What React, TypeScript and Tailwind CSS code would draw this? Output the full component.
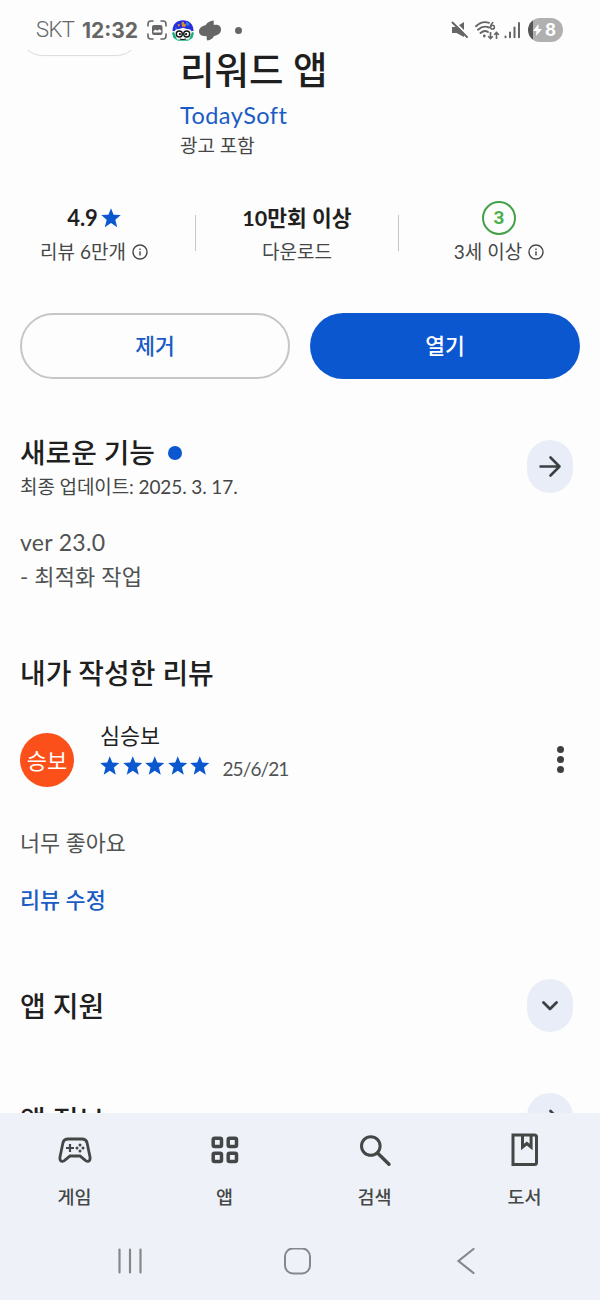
import type { ReactNode } from "react";

function Star({ className }: { className: string }) {
  return (
    <svg viewBox="0 0 20 20" className={className} fill="#0b57d0">
      <path d="M10 .2l2.6 6.500 7.200.4-5.500 4.700 1.900 7.400L10 15.100l-6.200 4.100 1.900-7.400L.2 7.100l7.200-.4z" />
    </svg>
  );
}

function InfoIcon() {
  return (
    <svg viewBox="0 0 16 16" className="size-4" fill="none" stroke="#444746" strokeWidth="1.4">
      <circle cx="8" cy="8" r="7" />
      <path d="M8 7.2v4.2M8 4.4v1.5" />
    </svg>
  );
}

function RoundButton({ label, children }: { label: string; children: ReactNode }) {
  return (
    <button
      aria-label={label}
      className="flex h-[53px] w-[46px] shrink-0 items-center justify-center rounded-[23px] bg-[#e8edf7]"
    >
      {children}
    </button>
  );
}

function StatusBar() {
  return (
    <header className="flex h-[50px] items-center pt-[10px] pl-[36px] text-[#666]">
      <span className="w-[46px] shrink-0 font-['Roboto'] text-[22px] leading-6 font-light tracking-[-0.6px]">SKT</span>
      <span className="w-[65px] shrink-0 pt-px font-['Inter'] text-[21px] leading-6 font-bold">
        12:32
      </span>

      {/* Screen capture */}
      <svg viewBox="0 0 20 20" className="size-5 shrink-0" fill="none">
        <path
          d="M1 6V4a3 3 0 0 1 3-3h2M14 1h2a3 3 0 0 1 3 3v2M19 14v2a3 3 0 0 1-3 3h-2M6 19H4a3 3 0 0 1-3-3v-2"
          stroke="#666"
          strokeWidth="1.6"
          strokeLinecap="round"
        />
        <rect x="5" y="5" width="10.5" height="10" rx="2" fill="#666" />
        <path d="M6.5 12.5V11l2-1.6 2 1.3 1.7-1.5 2 1.4v1.9z" fill="#fdfdfd" />
      </svg>

      {/* Cartoon app badge */}
      <svg viewBox="0 0 22 21" className="ml-[5px] h-[21px] w-[22px] shrink-0">
        <path d="M.5 11C.5 4 5 .3 11 .3S21.500 4 21.500 11z" fill="#2430dc" />
        <path d="M9.500 2.500l2-1 1 2.500 2 .5-1.500 2.500-3-.5zM5.500 4.500l2-.5.500 2-2 .5z" fill="#d98c34" />
        <path d="M14 1.500l3.500 2-1.500 3-2-2zM3 7l2 1-1 2z" fill="#3979e8" />
        <path d="M0 13l3-2h16l3 2-1.500 5-4.500 2.700H6L1.500 18z" fill="#18b07c" />
        <path d="M2 12Q3.500 8.500 7 9l4-1.200L15 9q3.500-.5 5 3l-3 7.500H5z" fill="#f8f8f8" />
        <circle cx="7.300" cy="14" r="3" fill="#fff" stroke="#161616" strokeWidth="1.400" />
        <circle cx="14.700" cy="14" r="3" fill="#fff" stroke="#161616" strokeWidth="1.400" />
        <circle cx="7.900" cy="14.200" r="1.100" fill="#161616" />
        <circle cx="14.100" cy="14.200" r="1.100" fill="#161616" />
        <path d="M8 19q3 1.300 6 0" stroke="#161616" strokeWidth="1" fill="none" />
      </svg>

      <svg viewBox="0 0 22 21" className="ml-[5px] h-[21px] w-[22px] shrink-0" fill="#666">
        <path d="M14.500.4C15.200 2 14.500 3.500 14.800 5C18.500 4.300 22 5.500 22 9.500C22 13.500 18.500 15.500 15 16C14 18.500 11.500 20.300 8.300 20.600C7.300 19.300 7.900 17.700 7.500 16.100C3.500 16.600 0 15 0 11.300C0 7.500 3.700 5.800 6.800 4.900C8 2.500 11 .5 14.500.4z" />
      </svg>
      <span className="ml-[14px] size-[7px] shrink-0 rounded-full bg-[#666]" />

      {/* Muted speaker */}
      <svg viewBox="0 0 18 18" className="ml-[209px] h-[18px] w-[18px] shrink-0">
        <path d="M1 6h4l8-5v15L5.500 12H1z" fill="#666" />
        <path d="M3 .5l15 15" stroke="#fdfdfd" strokeWidth="2" />
        <path d="M1.500 1.500l14.500 14.500" stroke="#666" strokeWidth="2" strokeLinecap="round" />
      </svg>

      {/* Wi-Fi 6 with traffic arrows */}
      <svg viewBox="0 0 25 19" className="ml-[6px] h-[19px] w-[25px] shrink-0" fill="none" stroke="#666">
        <path d="M1 5.200Q7-.5 14 1.800M3 8.700Q8 4 14 6.500M5.500 12Q9.500 8.500 13 11" strokeWidth="1.900" strokeLinecap="round" />
        <circle cx="9.300" cy="15" r="1.400" fill="#666" stroke="none" />
        <circle cx="17.500" cy="6.200" r="1.900" strokeWidth="1.500" />
        <path d="M18.300 1.200Q15.700 3 15.600 6" strokeWidth="1.500" />
        <path d="M15.500 11v6.500M13.200 15.300l2.300 2.300 2.300-2.300M21.500 18v-6.500M19.200 13.700l2.300-2.300 2.300 2.300" strokeWidth="1.600" />
      </svg>

      <svg viewBox="0 0 16 18" className="ml-[4px] h-[18px] w-4 shrink-0" stroke="#666" strokeWidth="2" strokeLinecap="round">
        <path d="M1.500 15.500v.8M6 11.500v4.800M10.500 6.500v9.800M15 2v14.300" />
      </svg>

      <div className="ml-[8px] flex h-6 w-[35px] shrink-0 items-center overflow-hidden rounded-full bg-linear-to-r from-[#555] from-14% to-[#b0b0b0] to-14%">
        <svg viewBox="0 0 9 12" className="ml-[5px] h-3 w-[9px] shrink-0" fill="#fff">
          <path d="M5.500 0L0 7h3.500L3 12l6-7H5.500z" />
        </svg>
        <span className="ml-[3px] font-['Inter'] text-[17px] leading-6 font-bold text-white">8</span>
      </div>
    </header>
  );
}

function AppHeader() {
  return (
    <section className="flex h-[113px]">
      {/* Lower edge of the app icon */}
      <div className="h-[7px] w-[180px] shrink-0 overflow-hidden pl-[20px]">
        <div className="-mt-[40px] h-[45px] w-[119px] rounded-[24px] bg-[#fefefe] shadow-[0_1px_1px_rgba(0,0,0,0.14)]" />
      </div>
      <div>
        <h1 className="h-[47px] text-[37.5px] leading-[40px] font-medium text-[#1f1f1f]">리워드 앱</h1>
        <p className="h-[37px] text-[23.5px] leading-[36px] tracking-[0.45px] text-[#1a5cc4]">TodaySoft</p>
        <p className="text-[19px] leading-[24px] text-[#444746]">광고 포함</p>
      </div>
    </section>
  );
}

function Stats() {
  return (
    <section className="mt-[37px] flex h-[66px] text-[19px] leading-[24px] text-[#444746]">
      <div className="flex w-[195px] flex-col items-center pr-[7px]">
        <div className="flex h-[40px] items-center gap-[3px] pb-[4px] text-[22px] font-bold text-[#1f1f1f]">
          4.9
          <Star className="size-[20px]" />
        </div>
        <div className="flex items-center gap-[6px]">
          리뷰 6만개
          <InfoIcon />
        </div>
      </div>
      <div className="mt-[15px] h-[36px] w-px bg-[#c4c7c5]" />
      <div className="flex w-[202px] flex-col items-center">
        <div className="flex h-[40px] items-center pb-[4px] text-[21.5px] font-bold text-[#1f1f1f]">10만회 이상</div>
        다운로드
      </div>
      <div className="mt-[15px] h-[36px] w-px bg-[#c4c7c5]" />
      <div className="flex flex-1 flex-col items-center pr-px">
        <div className="flex h-[40px] items-center pb-[4px]">
          <span className="flex size-[34px] items-center justify-center rounded-full border-[2.5px] border-[#43a047] font-['Roboto'] text-[19px] font-bold text-[#4caf50]">
            3
          </span>
        </div>
        <div className="flex items-center gap-[6px]">
          3세 이상
          <InfoIcon />
        </div>
      </div>
    </section>
  );
}

function WhatsNew() {
  return (
    <section className="mt-[56px] h-[218px] px-[20px]">
      <div className="flex justify-between pr-[7px]">
        <div>
          <h2 className="flex h-[36px] items-center gap-[13px] text-[27.8px] leading-[34px] font-medium text-[#1f1f1f]">
            새로운 기능
            <span className="size-[14px] rounded-full bg-[#0b57d0]" />
          </h2>
          <p className="pt-px text-[19px] leading-[30px] tracking-[-0.1px] text-[#444746]">최종 업데이트: 2025. 3. 17.</p>
        </div>
        <div className="pt-[5px]">
          <RoundButton label="새로운 기능">
            <svg viewBox="0 0 24 24" className="size-6" fill="none" stroke="#3c4043" strokeWidth="2.600" strokeLinecap="round" strokeLinejoin="round">
              <path d="M2.500 11.500h19M12.500 2.500l9 9-9 9" />
            </svg>
          </RoundButton>
        </div>
      </div>
      <p className="mt-[23px] text-[22px] leading-[34px] text-[#505352]">
        <span className="text-[23px] tracking-[0.3px]">ver 23.0</span>
        <br />
        <span className="tracking-[0.2px]">- 최적화 작업</span>
      </p>
    </section>
  );
}

function MyReview() {
  return (
    <section className="h-[326px] px-[20px]">
      <h2 className="text-[27.9px] leading-[40px] font-medium text-[#1f1f1f]">내가 작성한 리뷰</h2>
      <div className="mt-[28px] flex h-[68px]">
        <div className="mt-[12px] flex size-[54px] items-center justify-center rounded-full bg-[#fb5019] text-[22px] font-normal text-white">
          승보
        </div>
        <div className="ml-[26px]">
          <p className="text-[21.8px] leading-[30px] text-[#1f1f1f]">심승보</p>
          <div className="flex h-[30px] items-center gap-[3px]">
            {[1, 2, 3, 4, 5].map((n) => (
              <Star key={n} className="size-[19.5px]" />
            ))}
            <span className="ml-[10px] pt-[5px] text-[19px] leading-[24px] tracking-[-0.9px] text-[#505352]">25/6/21</span>
          </div>
        </div>
        <button aria-label="더보기" className="mt-[25px] mr-[16px] ml-auto flex h-[27px] flex-col gap-[3px]">
          <span className="size-[7px] rounded-full bg-[#3c4043]" />
          <span className="size-[7px] rounded-full bg-[#3c4043]" />
          <span className="size-[7px] rounded-full bg-[#3c4043]" />
        </button>
      </div>
      <p className="mt-[37px] text-[21.8px] leading-[34px] text-[#505352]">너무 좋아요</p>
      <button className="mt-[23px] text-[21.8px] leading-[34px] font-medium text-[#1a5cc4]">리뷰 수정</button>
    </section>
  );
}

const navItems = [
  {
    label: "게임",
    icon: (
      <>
        <path d="M10 6h14q4 0 5 3.500l3 14.500q.5 3.800-2 4.300-1.700.2-3-1.200L22 23H12l-5 4.100q-1.300 1.400-3 1.200-2.500-.5-2-4.300L5 9.500Q6 6 10 6z" strokeWidth="2.800" />
        <path d="M8 15h8M12 11v8" strokeWidth="2.200" />
        <g fill="#444746" stroke="none">
          <circle cx="22" cy="12" r="1.500" />
          <circle cx="22" cy="18" r="1.500" />
          <circle cx="19" cy="15" r="1.500" />
          <circle cx="25" cy="15" r="1.500" />
        </g>
      </>
    ),
  },
  {
    label: "앱",
    icon: (
      <g strokeWidth="3.500">
        <rect x="5.200" y="5.200" width="8.300" height="8.300" rx="1.500" />
        <rect x="20.200" y="5.200" width="8.300" height="8.300" rx="1.500" />
        <rect x="5.200" y="20.200" width="8.300" height="8.300" rx="1.500" />
        <rect x="20.200" y="20.200" width="8.300" height="8.300" rx="1.500" />
      </g>
    ),
  },
  {
    label: "검색",
    icon: (
      <>
        <circle cx="12.800" cy="13" r="9.300" strokeWidth="3" />
        <path d="M19.500 20L31 31.300" strokeWidth="3.400" strokeLinecap="round" />
      </>
    ),
  },
  {
    label: "도서",
    icon: (
      <>
        <path d="M5 2h21.500q2 0 2 2v25.500q0 2-2 2H5z" strokeWidth="3" />
        <path d="M14.500 2v12l4.300-3.500 4.300 3.500V2" strokeWidth="3" />
      </>
    ),
  },
];

function BottomBar() {
  return (
    <footer className="h-[187px] shrink-0 bg-[#eef2f8]">
      <nav className="grid h-[109px] grid-cols-4">
        {navItems.map((item) => (
          <a key={item.label} className="flex flex-col items-center pt-[20px] pr-px text-[18.5px] leading-[24px] font-medium text-[#444746]">
            <svg viewBox="0 0 34 34" className="mb-[18px] size-[34px]" fill="none" stroke="#444746">
              {item.icon}
            </svg>
            {item.label}
          </a>
        ))}
      </nav>

      {/* System navigation */}
      <div className="flex h-[78px] items-start pt-[26px] pl-[117px]">
        <svg viewBox="0 0 26 28" className="h-[28px] w-[26px]" stroke="#85878b" strokeWidth="2.200" strokeLinecap="round">
          <path d="M2.500 1.500v23M13 1.500v23M23.500 1.500v23" />
        </svg>
        <svg viewBox="0 0 28 28" className="ml-[141px] size-[28px]" fill="none" stroke="#85878b" strokeWidth="2">
          <rect x="1" y="0.500" width="25" height="25" rx="8" />
        </svg>
        <svg viewBox="0 0 20 28" className="ml-[144px] h-[28px] w-[20px]" fill="none" stroke="#85878b" strokeWidth="2.200" strokeLinecap="round">
          <path d="M17.500 1L2.500 13l15 12" />
        </svg>
      </div>
    </footer>
  );
}

export default function App() {
  return (
    <div className="flex h-[1300px] w-[600px] flex-col overflow-hidden bg-[#fdfdfd] font-['Lato','Noto_Sans_CJK_KR',sans-serif]">
      <main className="h-[1113px] overflow-hidden">
        <StatusBar />
        <AppHeader />
        <Stats />
        <div className="mt-[47px] grid h-[66px] grid-cols-2 gap-[20px] px-[20px] text-[21.5px] font-medium">
          <button className="rounded-full border-2 border-[#c4c7c5] text-[#1a5cc4]">제거</button>
          <button className="rounded-full bg-[#0b57d0] text-white">열기</button>
        </div>
        <WhatsNew />
        <MyReview />
        <section className="flex h-[53px] items-center justify-between pr-[27px] pl-[20px]">
          <h2 className="text-[28px] leading-[40px] font-medium text-[#1f1f1f]">앱 지원</h2>
          <RoundButton label="앱 지원">
            <svg viewBox="0 0 18 10" className="h-[10px] w-[18px]" fill="none" stroke="#3c4043" strokeWidth="2.800" strokeLinecap="round" strokeLinejoin="round">
              <path d="M2.500 1.500l6.500 6.500 6.500-6.500" />
            </svg>
          </RoundButton>
        </section>
        <section className="mt-[61px] flex h-[53px] items-center justify-between pr-[27px] pl-[20px]">
          <h2 className="text-[28px] leading-[40px] font-medium text-[#1f1f1f]">앱 정보</h2>
          <RoundButton label="앱 정보">
            <svg viewBox="0 0 24 24" className="size-6" fill="none" stroke="#3c4043" strokeWidth="2.600" strokeLinecap="round" strokeLinejoin="round">
              <path d="M2.500 12h19M12.500 3l9 9-9 9" />
            </svg>
          </RoundButton>
        </section>
      </main>
      <BottomBar />
    </div>
  );
}
